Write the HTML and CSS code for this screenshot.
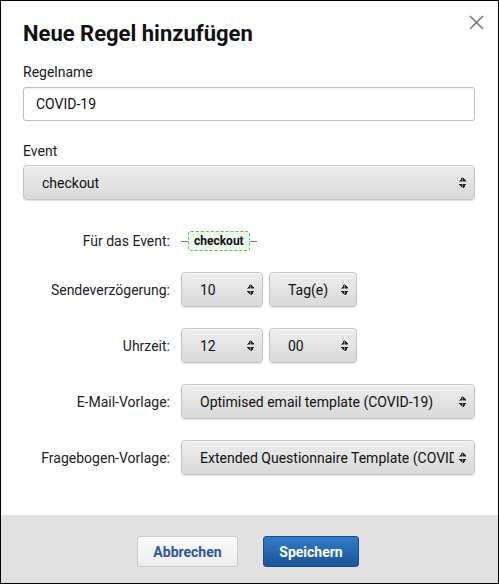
FILE: index.html
```html
<!DOCTYPE html>
<html>
<head>
	<title>Neue Regel hinzufügen</title>
	<meta charset="utf-8">
	<link rel="stylesheet" href="styles.css">
</head>
<body>
	<article class="modal">
		<button class="close" type="button" aria-label="Schließen">
			<svg width="15" height="15" viewBox="0 0 15 15"><path d="M1 1L14 14M14 1L1 14" stroke="#7a7a7a" stroke-width="1.6" fill="none"/></svg>
		</button>
		<section class="body">
			<h1 class="title">Neue Regel hinzufügen</h1>
			<label class="label" for="name">Regelname</label>
			<input class="text" id="name" type="text" value="COVID-19">
			<label class="label label-event" for="event">Event</label>
			<div class="sel sel-wide">
				<select id="event"><option>checkout</option></select>
			</div>
			<div class="grid">
				<span class="key">Für das Event:</span>
				<div class="flow">
					<span class="line"></span><span class="tag">checkout</span><span class="line"></span>
				</div>
				<span class="key">Sendeverzögerung:</span>
				<div class="pair">
					<div class="sel sel-num"><select><option>10</option></select></div>
					<div class="sel sel-unit"><select><option>Tag(e)</option></select></div>
				</div>
				<span class="key">Uhrzeit:</span>
				<div class="pair">
					<div class="sel sel-num"><select><option>12</option></select></div>
					<div class="sel sel-unit"><select><option>00</option></select></div>
				</div>
				<span class="key">E-Mail-Vorlage:</span>
				<div class="sel"><select><option>Optimised email template (COVID-19)</option></select></div>
				<span class="key">Fragebogen-Vorlage:</span>
				<div class="sel"><select><option>Extended Questionnaire Template (COVID-19)</option></select></div>
			</div>
		</section>
		<footer class="foot">
			<button class="btn btn-cancel" type="button">Abbrechen</button>
			<button class="btn btn-save" type="button">Speichern</button>
		</footer>
	</article>
</body>
</html>
```

FILE: styles.css
```css
*{
	padding: 0;
	margin: 0;
	box-sizing: border-box;
}
body{
	font-family: Roboto, "Liberation Sans", sans-serif;
	color: #1a1a1a;
	background: #fff;
}
.modal{
	width: 499px;
	height: 584px;
	border: 1px solid #000;
	display: flex;
	flex-direction: column;
	position: relative;
}
.close{
	position: absolute;
	top: 13px;
	right: 13px;
	width: 17px;
	height: 17px;
	border: 0;
	background: transparent;
	display: flex;
	align-items: center;
	justify-content: center;
}
.body{
	flex: 1;
	padding: 19px 23px 0 22px;
	display: flex;
	flex-direction: column;
}
.title{
	font-size: 22px;
	font-weight: 700;
	line-height: 28px;
	color: #111;
	margin-bottom: 15px;
}
.label{
	font-size: 14px;
	line-height: 18px;
	margin-bottom: 6px;
}
.label-event{
	margin-top: 21px;
	margin-bottom: 5px;
}
.text{
	width: 452px;
	height: 34px;
	border: 1px solid #bdbdbd;
	border-radius: 3px;
	padding: 0 12px;
	font: 14px Roboto, "Liberation Sans", sans-serif;
	color: #111;
	box-shadow: inset 0 1px 1px rgba(0,0,0,0.06);
}
.sel{
	position: relative;
	height: 35px;
}
.sel-wide{
	width: 452px;
}
.sel select{
	-webkit-appearance: none;
	appearance: none;
	width: 100%;
	height: 100%;
	border: 1px solid #c4c4c4;
	border-radius: 4px;
	background: linear-gradient(#ededed, #e3e3e3 50%, #d9d9d9);
	box-shadow: inset 0 1px 0 rgba(255,255,255,0.7), 0 1px 1px rgba(0,0,0,0.12);
	padding: 0 20px 0 18px;
	font: 14px Roboto, "Liberation Sans", sans-serif;
	color: #111;
	outline: none;
}
.sel::after{
	content: "";
	position: absolute;
	right: 9px;
	top: 12px;
	width: 7px;
	height: 11px;
	background:
		linear-gradient(to bottom right, transparent 50%, #222 50%) left top / 3.5px 4.5px no-repeat,
		linear-gradient(to bottom left, transparent 50%, #222 50%) right top / 3.5px 4.5px no-repeat,
		linear-gradient(to top right, transparent 50%, #222 50%) left bottom / 3.5px 4.5px no-repeat,
		linear-gradient(to top left, transparent 50%, #222 50%) right bottom / 3.5px 4.5px no-repeat;
	pointer-events: none;
}
.grid{
	display: grid;
	grid-template-columns: 147px 294px;
	column-gap: 11px;
	row-gap: 21px;
	align-items: center;
	margin-top: 31px;
}
.key{
	font-size: 14px;
	text-align: right;
	color: #222;
}
.flow{
	display: flex;
	align-items: center;
	height: 20px;
}
.line{
	width: 7px;
	height: 1px;
	background: #777;
}
.tag{
	height: 20px;
	padding: 0 5px;
	border: 1px dashed #58c458;
	border-radius: 3px;
	background: #eefaee;
	font-size: 12px;
	font-weight: 700;
	line-height: 18px;
	color: #111;
}
.pair{
	display: flex;
	gap: 6px;
}
.sel-num{
	width: 82px;
}
.sel-unit{
	width: 88px;
}
.foot{
	height: 68px;
	background: #e1e1e1;
	display: flex;
	justify-content: center;
	align-items: center;
	gap: 25px;
	padding: 5px 3px 0 0;
}
.btn{
	height: 31px;
	border-radius: 3px;
	font: 700 14px Roboto, "Liberation Sans", sans-serif;
}
.btn-cancel{
	width: 101px;
	border: 1px solid #cbcbcb;
	background: linear-gradient(#fafafa, #ededed);
	color: #2a579e;
}
.btn-save{
	width: 96px;
	border: 1px solid #1a4b8c;
	background: linear-gradient(#2f7dc6, #1c5498);
	color: #fff;
}
```
